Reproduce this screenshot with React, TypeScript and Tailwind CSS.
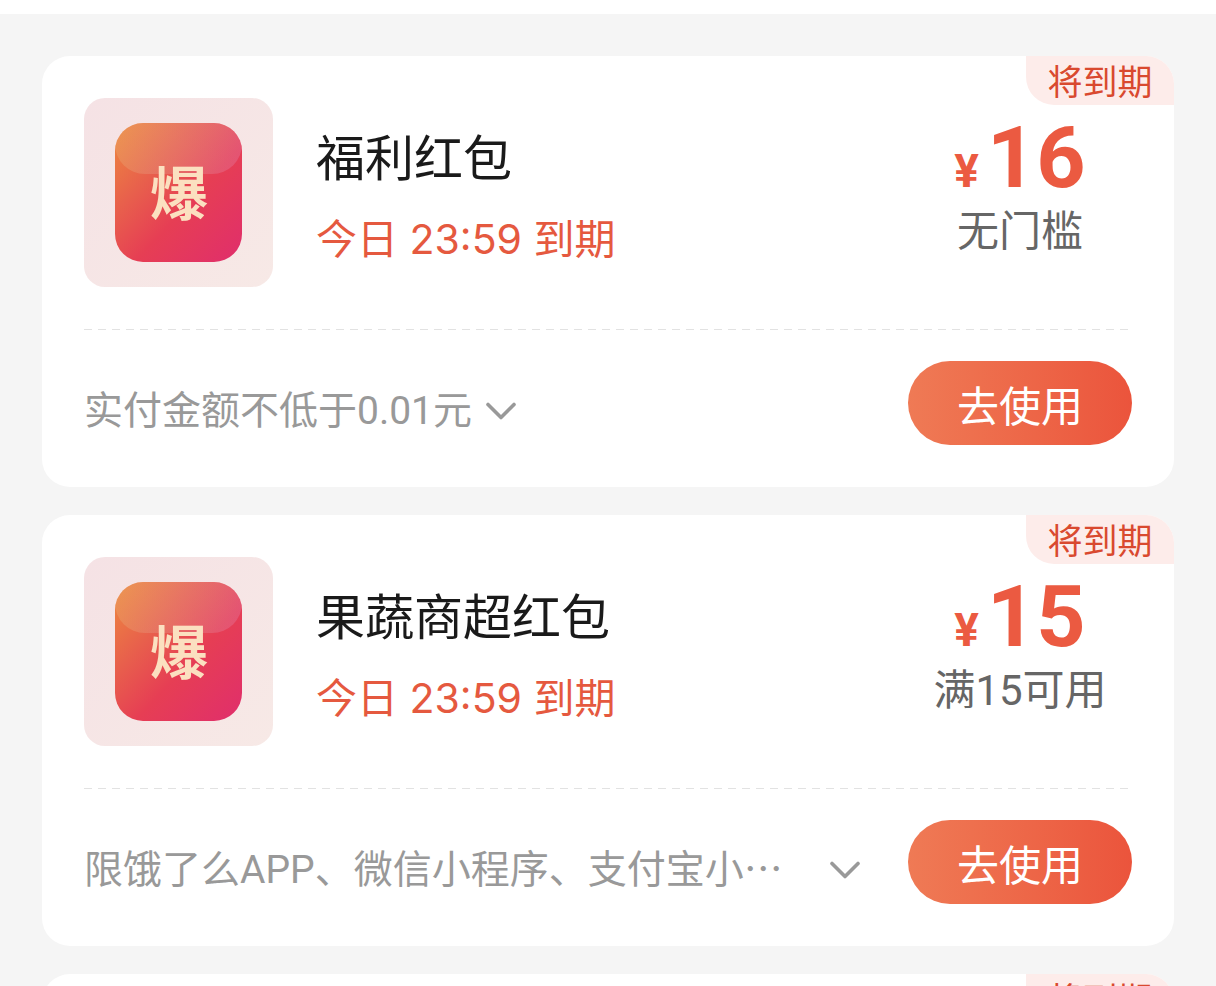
import { useId } from "react";

type Coupon = {
  id: string;
  title: string;
  expires: string;
  amount: number;
  condition: string;
  note: string;
  clipped?: boolean;
};

const coupons: Coupon[] = [
  { id: "welfare", title: "福利红包", expires: "23:59", amount: 16, condition: "无门槛", note: "实付金额不低于0.01元" },
  {
    id: "grocery",
    title: "果蔬商超红包",
    expires: "23:59",
    amount: 15,
    condition: "满15可用",
    note: "限饿了么APP、微信小程序、支付宝小",
    clipped: true,
  },
  {
    id: "grocery-2",
    title: "果蔬商超红包",
    expires: "23:59",
    amount: 15,
    condition: "满15可用",
    note: "限饿了么APP、微信小程序、支付宝小",
    clipped: true,
  },
];

function CouponLogo() {
  const id = useId();
  return (
    <div className="flex h-[189px] w-[189px] shrink-0 items-center justify-center rounded-[21px] bg-linear-to-br from-[#f5e2e5] to-[#f7e9e6]">
      <svg width="127" height="139" viewBox="0 0 127 139" aria-hidden="true">
        <defs>
          <linearGradient id={`${id}-fill`} x1="0" y1="0" x2="1" y2="1">
            <stop offset="0" stopColor="#ee8a3e" />
            <stop offset="0.32" stopColor="#e8604c" />
            <stop offset="0.58" stopColor="#e63e54" />
            <stop offset="1" stopColor="#e02e6c" />
          </linearGradient>
          <linearGradient id={`${id}-gloss`} x1="0" y1="0" x2="1" y2="0">
            <stop offset="0" stopColor="#e8b880" />
            <stop offset="1" stopColor="#e090c0" />
          </linearGradient>
          <clipPath id={`${id}-clip`}>
            <rect width="127" height="139" rx="28" />
          </clipPath>
        </defs>
        <g clipPath={`url(#${id}-clip)`}>
          <rect width="127" height="139" fill={`url(#${id}-fill)`} />
          <rect y="-40" width="127" height="91" rx="30" fill={`url(#${id}-gloss)`} fillOpacity="0.28" />
        </g>
        <text
          x="64"
          y="92"
          textAnchor="middle"
          fill="#fbe0c0"
          className="font-['Noto_Sans_CJK_SC',sans-serif] text-[58px] font-bold"
        >
          爆
        </text>
      </svg>
    </div>
  );
}

function Chevron() {
  return (
    <svg width="30" height="18" viewBox="0 0 30 18" fill="none" aria-hidden="true" className="shrink-0">
      <path d="M2 2.5 15 15.5 28 2.5" stroke="#999" strokeWidth="3.6" strokeLinecap="round" strokeLinejoin="round" />
    </svg>
  );
}

function CouponCard({ coupon }: { coupon: Coupon }) {
  return (
    <li className="relative shrink-0 overflow-hidden rounded-[28px] bg-white p-[42px]">
      <span className="absolute top-0 right-0 flex h-[49px] w-[148px] items-center justify-center rounded-bl-[28px] bg-[#fdecea] pt-1 text-[35px] leading-none text-[#d9492f]">
        将到期
      </span>

      <div className="flex">
        <CouponLogo />
        <div className="ml-[43px] flex-1 pt-[31px]">
          <h2 className="text-[49px] leading-[60px] text-[#1a1a1a]">{coupon.title}</h2>
          <p className="mt-5 text-[41px] leading-[60px] text-[#e5593f]">今日 {coupon.expires} 到期</p>
        </div>
        <div className="w-56 shrink-0 pt-4 text-center font-['Roboto','Noto_Sans_CJK_SC',sans-serif]">
          <p className="text-[86px] leading-[88px] font-bold text-[#eb5a41]">
            <span className="mr-2 text-[46px] leading-none">¥</span>
            {coupon.amount}
          </p>
          <p className="text-[42px] leading-[60px] text-[#666]">{coupon.condition}</p>
        </div>
      </div>

      <div className="mt-[42px] h-px bg-[repeating-linear-gradient(90deg,#e2e2e2_0_8px,transparent_8px_14px)]" />

      <div className="mt-[31px] flex items-center justify-between">
        <button
          type="button"
          className="mr-12 flex min-w-0 flex-1 items-center gap-3.5 pt-4 text-left font-['Roboto','Noto_Sans_CJK_SC',sans-serif] text-[39px] leading-[60px] text-[#999]"
        >
          <span className={coupon.clipped ? "flex-1 whitespace-nowrap" : "whitespace-nowrap"}>
            {coupon.note}
            {coupon.clipped && <span className="font-['Noto_Sans_CJK_SC',sans-serif] leading-none">…</span>}
          </span>
          <Chevron />
        </button>
        <button
          type="button"
          className="h-21 w-56 shrink-0 rounded-full bg-linear-to-r from-[#ef7a55] to-[#eb543c] pt-1.5 text-[42px] text-white"
        >
          去使用
        </button>
      </div>
    </li>
  );
}

export default function App() {
  return (
    <main className="flex h-screen flex-col bg-white pt-3.5 font-['Inter','Noto_Sans_CJK_SC',sans-serif]">
      <ul className="flex min-h-0 flex-1 flex-col gap-7 overflow-y-auto bg-[#f5f5f5] p-[42px] [scrollbar-width:none]">
        {coupons.map((c) => (
          <CouponCard key={c.id} coupon={c} />
        ))}
      </ul>
    </main>
  );
}
